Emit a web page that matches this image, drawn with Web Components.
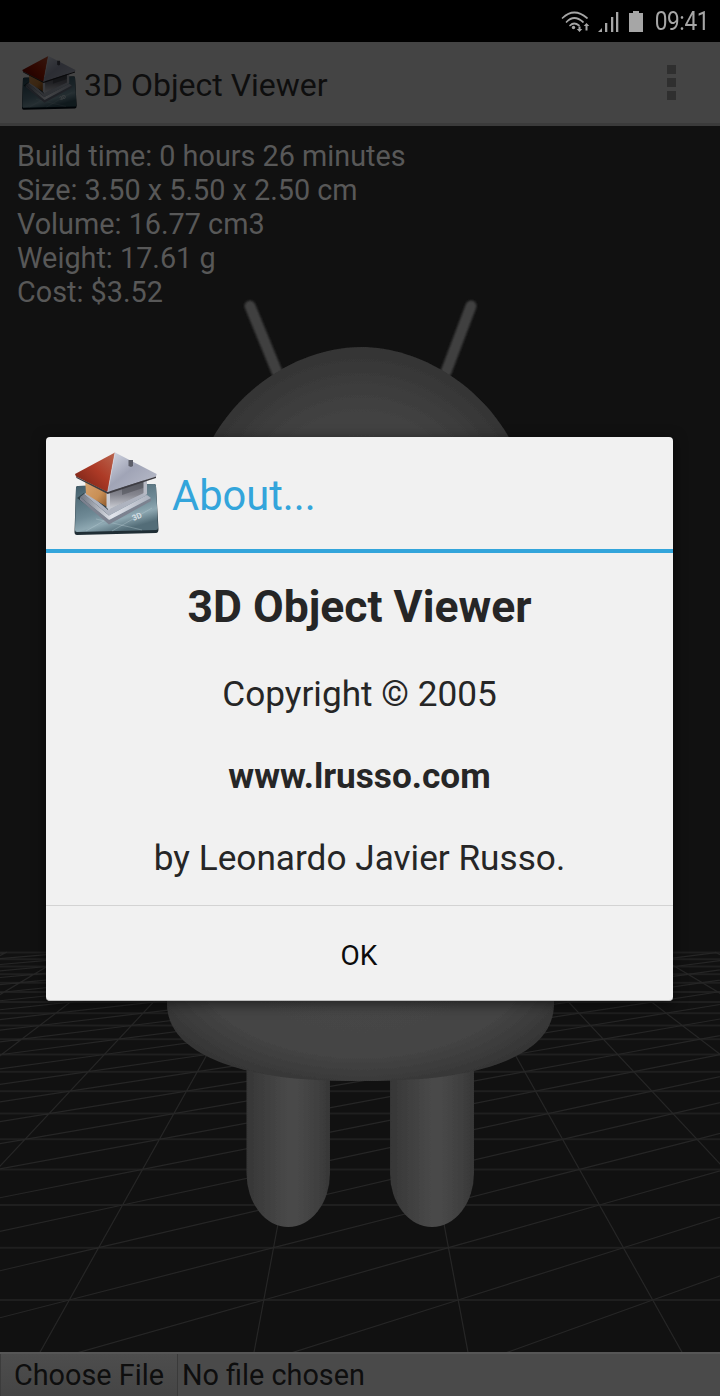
<!DOCTYPE html>
<html>
<head>
<meta charset="utf-8">
<title>3D Object Viewer</title>
<style>
  html, body { margin: 0; padding: 0; background: #111; }
  body {
    position: relative;
    display: flex;
    flex-direction: column;
    width: 720px;
    height: 1396px;
    overflow: hidden;
    font-family: Roboto, "Liberation Sans", sans-serif;
  }
</style>
</head>
<body>
<status-bar></status-bar>
<app-bar title="3D Object Viewer"></app-bar>
<viewer-stage>
  <div>Build time: 0 hours 26 minutes</div>
  <div>Size: 3.50 x 5.50 x 2.50 cm</div>
  <div>Volume: 16.77 cm3</div>
  <div>Weight: 17.61 g</div>
  <div>Cost: $3.52</div>
</viewer-stage>
<file-bar></file-bar>
<about-dialog></about-dialog>

<script>
class HouseLogo extends HTMLElement {
  constructor() {
    super();
    this.attachShadow({ mode: "open" });
    const id = this.getAttribute("prefix") || "logo";
    this.shadowRoot.innerHTML = `
      <style>
        :host { display: block; width: 86px; height: 86px; flex: none; }
        svg { display: block; width: 100%; height: 100%; }
      </style>
      <svg viewBox="73 450 86 86">
        <defs>
          <linearGradient id="${id}-plate" x1="0" y1="0" x2="0.5" y2="1">
            <stop offset="0" stop-color="#3f5a66"/>
            <stop offset="0.6" stop-color="#6f8a96"/>
            <stop offset="0.8" stop-color="#8ea8b2"/>
            <stop offset="1" stop-color="#536d78"/>
          </linearGradient>
          <linearGradient id="${id}-red" x1="0" y1="1" x2="1" y2="0">
            <stop offset="0" stop-color="#6d1f14"/>
            <stop offset="0.55" stop-color="#ad3a26"/>
            <stop offset="1" stop-color="#b9664f"/>
          </linearGradient>
          <linearGradient id="${id}-silver" x1="0" y1="0" x2="1" y2="1">
            <stop offset="0" stop-color="#d6dae5"/>
            <stop offset="0.45" stop-color="#a0a4b6"/>
            <stop offset="1" stop-color="#bcbfcc"/>
          </linearGradient>
          <linearGradient id="${id}-wall" x1="0" y1="0" x2="1" y2="1">
            <stop offset="0" stop-color="#d9a571"/>
            <stop offset="0.6" stop-color="#c98f55"/>
            <stop offset="1" stop-color="#8a5527"/>
          </linearGradient>
          <linearGradient id="${id}-inner" x1="0" y1="0" x2="0" y2="1">
            <stop offset="0" stop-color="#56575f"/>
            <stop offset="0.55" stop-color="#85868f"/>
            <stop offset="1" stop-color="#d3d5dc"/>
          </linearGradient>
          <linearGradient id="${id}-step" x1="0" y1="0" x2="1" y2="0">
            <stop offset="0" stop-color="#6e7480"/>
            <stop offset="0.45" stop-color="#e2e5ec"/>
            <stop offset="1" stop-color="#aab0bd"/>
          </linearGradient>
        </defs>
        <path d="M78 485 L154 483 Q156 483 156 485 L158.500 528 Q158.500 532 156 532 L77 534 Q74.500 534 74.500 531 L76 487 Q76 485 78 485Z" fill="#1f2d34"/>
        <path d="M78 485 L154 483 Q156 483 156 485 L158 527 Q158 529 156 529 L77 531 Q75 531 75 529 L76 487 Q76 485 78 485Z" fill="url(#${id}-plate)"/>
        <path d="M86 530 L116 513 M112 530 L152 507 M96 518 L142 529" stroke="#c3d3d9" stroke-width=".5" fill="none" opacity=".65"/>
        <path d="M77 497 L84 492 L108 506 L110 522 Z" fill="#24353a" opacity=".8"/>
        <path d="M80 499 L109 523.500 L151 500 L151 497 L109 519 L80 496Z" fill="#7c8290"/>
        <path d="M80 496 L109 519 L151 497 L147 494 L109 514.500 L84 493Z" fill="url(#${id}-step)"/>
        <path d="M84 493 L109 514.500 L147 494 L144 491 L108 509 L87 491Z" fill="#aeb3bf"/>
        <path d="M108 490 L146 475 L146 491 L108 509Z" fill="url(#${id}-inner)"/>
        <path d="M122 484 L146 476 L146 486 L122 494Z" fill="#4d4e55" opacity=".55"/>
        <path d="M85 477 L108 490 L107 506 L86 493Z" fill="url(#${id}-wall)"/>
        <path d="M106.500 489 L110 489 L110 509 L106.500 507Z" fill="#c9cbd3"/>
        <path d="M143.500 476 L147 475 L147 493 L143.500 494Z" fill="#b7bac4"/>
        <path d="M115 451.500 L75 473 L76 475.500 L107.700 491Z" fill="url(#${id}-red)"/>
        <path d="M115 451.500 L156.700 473 L156 475.500 L107.700 491Z" fill="url(#${id}-silver)"/>
        <path d="M76 475.500 L107.700 491 L156 475.500 L156 477 L107.700 493 L76.500 477Z" fill="#3d3c42"/>
        <path d="M115 451.500 L107.700 491" stroke="#dcdce4" stroke-width=".6"/>
        <path d="M128.500 459 h4.500 v6 l-2 1 l-2.500 -1z" fill="#5c5e68"/>
        <text x="138" y="518" transform="rotate(-24 138 518)" font-family="Roboto, sans-serif" font-weight="700" font-size="8" fill="#d6dfe3" text-anchor="middle">3D</text>
      </svg>
    `;
  }
}

class StatusBar extends HTMLElement {
  constructor() {
    super();
    this.attachShadow({ mode: "open" });
    this.shadowRoot.innerHTML = `
      <style>
        :host {
          display: flex;
          flex: none;
          align-items: center;
          justify-content: flex-end;
          height: 42px;
          background: #000;
          color: #a6a6a6;
          padding-right: 11px;
          box-sizing: border-box;
        }
        svg { display: block; margin-right: 6px; }
        .time {
          font-size: 25px;
          line-height: 42px;
          width: 60px;
          white-space: nowrap;
          transform: scaleX(.906);
          transform-origin: right center;
          text-align: right;
          letter-spacing: -.4px;
          position: relative;
          top: 1px;
        }
      </style>
      <svg width="82" height="42" viewBox="561 0 82 42" fill="#a6a6a6">
        <g fill="none" stroke="#a6a6a6" stroke-width="1.700" stroke-linecap="round">
          <path d="M562.500 18 Q574 7 587 18"/>
          <path d="M566.500 22 Q574 14 583 22"/>
          <path d="M570 25.500 Q574 21.500 579 25.500"/>
        </g>
        <circle cx="573.500" cy="27.500" r="1.700"/>
        <path d="M578.500 26.500 h2 v2.500 h1.800 l-2.800 3 l-2.800 -3 h1.800z"/>
        <path d="M586.500 23 l2.800 3 h-1.800 v4.500 h-2 v-4.500 h-1.800z"/>
        <path d="M598 32 L602 28 V32Z"/>
        <rect x="605" y="23" width="2.300" height="9"/>
        <rect x="611" y="17" width="2.300" height="15"/>
        <rect x="616" y="12" width="2.300" height="20"/>
        <path d="M633 11 h6 v2 h4 v19 h-14 v-19 h4z"/>
      </svg>
      <div class="time">09:41</div>
    `;
  }
}

class AppBar extends HTMLElement {
  constructor() {
    super();
    this.attachShadow({ mode: "open" });
    this.shadowRoot.innerHTML = `
      <style>
        :host {
          display: flex;
          flex: none;
          align-items: center;
          height: 84px;
          box-sizing: border-box;
          background: #444;
          border-bottom: 3px solid #3b3b3b;
          padding-left: 21px;
          color: #0e0e0e;
        }
        house-logo { width: 56px; height: 56px; filter: brightness(.32) contrast(1.1); margin-top: 1px; }
        .title { margin-left: 7px; font-size: 32px; flex: 1; white-space: nowrap; position: relative; top: 2px; }
        .menu { display: flex; flex-direction: column; gap: 4px; margin-right: 44px; }
        .menu i { display: block; width: 9px; height: 9px; background: #2f2f2f; }
      </style>
      <house-logo prefix="bar"></house-logo>
      <div class="title"></div>
      <div class="menu"><i></i><i></i><i></i></div>
    `;
    this.shadowRoot.querySelector(".title").textContent = this.getAttribute("title");
  }
}

// ground grid is projected, the lines all go to one point at 361,780
const rowY = (k) => 780 + 1 / (0.001923 + k * 0.000215);
const colX = (i, y) => 361 + i * 0.374 * (y - 780);

function groundRows() {
  let d = "";
  for (let k = -1; k < 19; k++) {
    const y = rowY(k);
    if (y >= 952) {
      d += `M0 ${y.toFixed(1)}H720`;
    }
  }
  return d;
}

function groundSlants() {
  let d = "";
  for (let i = -20.5; i <= 20.5; i++) {
    d += `M${colX(i, 952).toFixed(1)} 952L${colX(i, 1400).toFixed(1)} 1400`;
  }
  for (let c = -40.5; c <= 20.5; c++) {
    let started = false;
    for (let k = -3; k < 19; k++) {
      const y = rowY(k);
      if (y < 952) {
        break;
      }
      d += `${started ? "L" : "M"}${colX(c + k, y).toFixed(1)} ${y.toFixed(1)}`;
      started = true;
    }
  }
  return d;
}

class ViewerStage extends HTMLElement {
  constructor() {
    super();
    this.attachShadow({ mode: "open" });
    this.shadowRoot.innerHTML = `
      <style>
        :host {
          display: block;
          position: relative;
          flex: 1;
          min-height: 0;
          background: #111;
          overflow: hidden;
        }
        svg { position: absolute; left: 0; top: -126px; width: 720px; height: 1396px; }
        .stats {
          position: relative;
          padding: 13px 0 0 17px;
          font-size: 28.800px;
          line-height: 34px;
          color: #585858;
        }
      </style>
      <svg viewBox="0 0 720 1396">
        <defs>
          <radialGradient id="head" gradientUnits="userSpaceOnUse" cx="361" cy="520" r="180">
            <stop offset="0" stop-color="#474747"/>
            <stop offset="0.6" stop-color="#424242"/>
            <stop offset="1" stop-color="#323232"/>
          </radialGradient>
          <radialGradient id="body" gradientUnits="userSpaceOnUse" cx="361" cy="960" r="225" gradientTransform="matrix(1 0 0 .58 0 403)">
            <stop offset="0" stop-color="#484848"/>
            <stop offset="0.75" stop-color="#444"/>
            <stop offset="1" stop-color="#353535"/>
          </radialGradient>
          <linearGradient id="leg" x1="0" y1="0" x2="1" y2="0">
            <stop offset="0" stop-color="#363636"/>
            <stop offset="0.3" stop-color="#424242"/>
            <stop offset="0.55" stop-color="#4a4a4a"/>
            <stop offset="0.85" stop-color="#404040"/>
            <stop offset="1" stop-color="#363636"/>
          </linearGradient>
          <filter id="soft"><feGaussianBlur stdDeviation=".7"/></filter>
          <filter id="softer"><feGaussianBlur stdDeviation="1.100"/></filter>
        </defs>
        <path id="rows" fill="none" stroke="#1f1f1f" stroke-width="2"></path>
        <path id="slants" fill="none" stroke="#262626" stroke-width="1.200"></path>
        <g filter="url(#softer)">
          <path d="M250 306 L277 372" stroke="#414141" stroke-width="11" stroke-linecap="round"/>
          <path d="M471 306 L446 372" stroke="#414141" stroke-width="11" stroke-linecap="round"/>
        </g>
        <g filter="url(#soft)">
          <path d="M191 520 C191 420 280 347 361 347 C442 347 531 420 531 520Z" fill="url(#head)"/>
          <path d="M246.500 1060 H330 V1173 A41.750 54 0 0 1 246.500 1173Z" fill="url(#leg)"/>
          <path d="M390 1060 H474 V1173 A42 54 0 0 1 390 1173Z" fill="url(#leg)"/>
          <path d="M167 960 H554 V1005 C553 1035 530 1052 498 1064 C455 1079 405 1081 360 1081 C315 1081 268 1079 225 1064 C193 1052 168 1035 167 1005Z" fill="url(#body)"/>
        </g>
      </svg>
      <div class="stats"><slot></slot></div>
    `;
    this.shadowRoot.querySelector("#rows").setAttribute("d", groundRows());
    this.shadowRoot.querySelector("#slants").setAttribute("d", groundSlants());
  }
}

class FileBar extends HTMLElement {
  constructor() {
    super();
    this.attachShadow({ mode: "open" });
    this.shadowRoot.innerHTML = `
      <style>
        :host {
          display: flex;
          flex: none;
          height: 44px;
          box-sizing: border-box;
          background: #4a4a4a;
          border-top: 2px solid #565656;
          color: #0e0e0e;
          font-size: 28.800px;
          line-height: 42px;
          white-space: nowrap;
        }
        .btn {
          width: 178px;
          box-sizing: border-box;
          padding-left: 13px;
          border-left: 1px solid #3c3c3c;
          border-right: 1px solid #3a3a3a;
          background: linear-gradient(#4d4d4d, #454545);
        }
        .name { padding-left: 4px; }
      </style>
      <div class="btn">Choose File</div>
      <div class="name">No file chosen</div>
    `;
  }
}

class AboutDialog extends HTMLElement {
  constructor() {
    super();
    this.attachShadow({ mode: "open" });
    this.shadowRoot.innerHTML = `
      <style>
        :host {
          display: flex;
          flex-direction: column;
          position: absolute;
          left: 46px;
          top: 437px;
          width: 627px;
          height: 564px;
          background: #f1f1f1;
          border-radius: 4px;
          border-bottom: 1px solid #bdbdbd;
          box-sizing: border-box;
          box-shadow: 0 3px 14px rgba(0, 0, 0, .55);
          color: #262626;
          text-align: center;
        }
        .head {
          display: flex;
          align-items: center;
          flex: none;
          height: 112px;
          padding-left: 27px;
          border-bottom: 4px solid #33a5db;
        }
        .head house-logo { margin-top: 2px; }
        .head div {
          margin-left: 13px;
          font-size: 41.600px;
          color: #33a5db;
          position: relative;
          top: 2px;
        }
        .msg {
          display: flex;
          flex-direction: column;
          flex: 1;
          padding-top: 26px;
          gap: 45px;
          border-bottom: 1px solid #d3d3d3;
          font-size: 35.200px;
          line-height: 37px;
        }
        .msg h1 { margin: 0 0 -4px; font-size: 44.500px; line-height: 56px; font-weight: 700; }
        .msg b { font-weight: 700; }
        .ok {
          flex: none;
          height: 94px;
          line-height: 100px;
          font-size: 28px;
          color: #0c0c0c;
          padding-right: 1px;
        }
      </style>
      <div class="head">
        <house-logo prefix="dlg"></house-logo>
        <div>About...</div>
      </div>
      <div class="msg">
        <h1>3D Object Viewer</h1>
        <div>Copyright © 2005</div>
        <b>www.lrusso.com</b>
        <div>by Leonardo Javier Russo.</div>
      </div>
      <div class="ok">OK</div>
    `;
  }
}

customElements.define("house-logo", HouseLogo);
customElements.define("status-bar", StatusBar);
customElements.define("app-bar", AppBar);
customElements.define("viewer-stage", ViewerStage);
customElements.define("file-bar", FileBar);
customElements.define("about-dialog", AboutDialog);
</script>
</body>
</html>
